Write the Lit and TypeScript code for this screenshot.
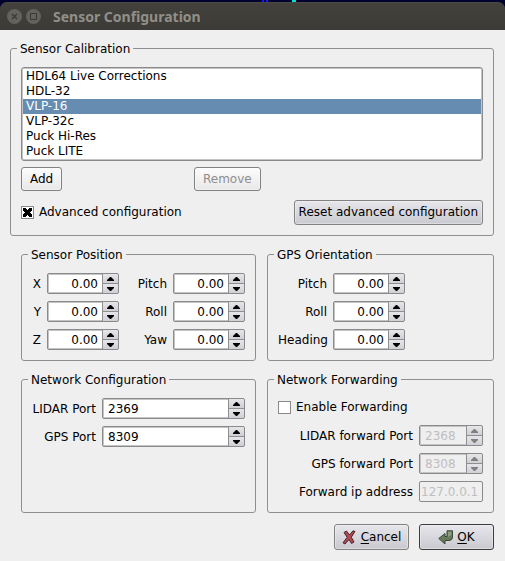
import { LitElement, html, css, svg } from "lit";
import { customElement, property } from "lit/decorators.js";

const controls = css`
  * {
    box-sizing: border-box;
  }
  button,
  input,
  select {
    font: inherit;
    color: inherit;
    margin: 0;
  }
`;

@customElement("spin-box")
class SpinBox extends LitElement {
  @property() value = "0";
  @property() name = "";
  @property({ type: Number }) step = 1;
  @property() align = "left";
  @property({ type: Boolean, reflect: true }) disabled = false;

  static styles = [
    controls,
    css`
      :host {
        display: block;
      }
      .box {
        display: flex;
        height: 21px;
        border: 1px solid #8a8a8a;
        border-radius: 2px;
        background: #8f8f8f;
        overflow: hidden;
      }
      .field {
        flex: 1;
        min-width: 0;
        width: 0;
        height: 19px;
        border: 1px solid #c4c4c4;
        border-right: 0;
        padding: 0 4px;
        background: #fff;
        outline: 0;
        appearance: textfield;
      }
      .field::-webkit-inner-spin-button,
      .field::-webkit-outer-spin-button {
        appearance: none;
        margin: 0;
      }
      .right {
        text-align: right;
      }
      .steps {
        display: grid;
        grid-template-rows: 1fr 1fr;
        gap: 1px;
        width: 16px;
        padding-left: 1px;
      }
      .step {
        display: grid;
        place-items: center;
        border: 0;
        padding: 0;
        background: linear-gradient(#e6e6ea, #cfcfd5);
      }
      .arrow {
        display: block;
        width: 7px;
        height: 4px;
        fill: #000;
      }
      :host([disabled]) .field {
        color: #bebebe;
        background: #efefef;
      }
      :host([disabled]) .arrow {
        fill: #808080;
      }
    `,
  ];

  private bump(direction: number) {
    const digits = this.step < 1 ? 2 : 0;
    this.value = (Number(this.value) + direction * this.step).toFixed(digits);
  }

  render() {
    return html`<div class="box">
      <input
        class="field ${this.align}"
        type="number"
        aria-label=${this.name}
        step=${this.step}
        .value=${this.value}
        ?disabled=${this.disabled}
      />
      <div class="steps">
        <button class="step" aria-label="Increase ${this.name}" ?disabled=${this.disabled} @click=${() => this.bump(1)}>
          <svg class="arrow" viewBox="0 0 7 4"><path d="M3 0h1l3 3v1H0V3z" /></svg>
        </button>
        <button class="step" aria-label="Decrease ${this.name}" ?disabled=${this.disabled} @click=${() => this.bump(-1)}>
          <svg class="arrow" viewBox="0 0 7 4"><path d="M0 0h7v1L4 4H3L0 1z" /></svg>
        </button>
      </div>
    </div>`;
  }
}

const cancelIcon = svg`
  <path d="M2 2.500L4.500 1L7.500 5L11 .8L13 1.500L9.300 7.200L12 12L9.500 13.500L7 9.500L3 14L1 12.800L5.200 7.300Z"
    fill="#b04a52" stroke="#4b2529" stroke-width="1" stroke-linejoin="round" />`;

const okIcon = svg`
  <path d="M9 .8H14.500V7Q14.500 10.500 11 10.500H7V14L.8 8.500L7 3.500V6.500H9Z"
    fill="#66795a" stroke="#3b4735" stroke-width="1" stroke-linejoin="round" />
  <path d="M10 1.800H13.500V5L10 7Z" fill="#8b9c80" />`;

@customElement("app-root")
class AppRoot extends LitElement {
  static styles = [
    controls,
    css`
      :host {
        display: flex;
        flex-direction: column;
        min-height: 100vh;
        background: #efefef;
        color: #000;
        font: 12px/15px "DejaVu Sans", sans-serif;
      }
      .desktop {
        padding-top: 2px;
        background: linear-gradient(90deg, transparent 262px, #1717ff 262px 264px, transparent 264px 266px, #1717ff 266px 268px, transparent 268px 292px, #00e0d0 292px 296px, transparent 296px) 0 0 / 100% 2px no-repeat #02022e;
      }
      .titlebar {
        display: flex;
        align-items: center;
        gap: 4px;
        height: 28px;
        padding: 0 7px;
        border-top: 1px solid #4b4a45;
        border-radius: 7px 7px 0 0;
        background: linear-gradient(#42413c, #3c3b37);
      }
      .window-button {
        display: block;
        width: 15px;
        height: 15px;
        border: 0;
        padding: 0;
        background: none;
      }
      .window-button svg {
        display: block;
      }
      .title {
        margin: 0 0 0 8px;
        color: #918f88;
        font: bold 14px/20px "Noto Sans", sans-serif;
      }
      .content {
        display: flex;
        flex-direction: column;
        gap: 10px;
        padding: 10px 11px 11px 10px;
      }
      .group {
        min-width: 0;
        margin: 0;
        border: 1px solid #8f8f8f;
        border-radius: 3px;
        padding: 10px;
      }
      .legend {
        margin-left: -4px;
        padding: 2px 3px 0;
      }
      .list {
        display: block;
        width: 100%;
        height: 94px;
        border: 1px solid #8a8a8a;
        border-radius: 3px;
        padding: 1px;
        background: #fff;
        box-shadow: inset 0 0 0 1px #c4c4c4;
        outline: 0;
        overflow: hidden;
      }
      .item {
        min-height: 15px;
        height: 15px;
        padding: 0 3px;
        line-height: 17px;
      }
      .item:checked {
        background: linear-gradient(#678cb2, #678cb2);
        -webkit-text-fill-color: #fff;
      }
      .row {
        display: flex;
        align-items: center;
        justify-content: space-between;
      }
      .edit-row {
        display: grid;
        grid-template-columns: 173fr 289fr;
        justify-items: start;
        margin: 6px 0 9px;
      }
      .button {
        display: inline-flex;
        align-items: center;
        justify-content: center;
        height: 25px;
        border: 1px solid #828282;
        border-radius: 3px;
        padding: 0 4px;
        background: linear-gradient(#e6e6eb, #c9c9d0);
        box-shadow: inset 0 0 0 1px #ffffff55;
      }
      .light {
        height: 24px;
        padding: 0 8px;
        background: linear-gradient(#fcfcfc, #e8e8e8);
      }
      .light:disabled {
        color: #8e8e8e;
      }
      .check {
        display: flex;
        align-items: center;
        gap: 5px;
      }
      .tick {
        appearance: none;
        width: 13px;
        height: 13px;
        border: 1px solid #8a8a8a;
        background: #fff;
      }
      .tick:checked {
        background:
          linear-gradient(45deg, transparent 35%, #000 35% 65%, transparent 65%) 1px 1px / 9px 9px no-repeat,
          linear-gradient(-45deg, transparent 35%, #000 35% 65%, transparent 65%) 1px 1px / 9px 9px no-repeat,
          #fff;
      }
      .panels {
        display: grid;
        grid-template-columns: 235fr 227fr;
        gap: 10px 11px;
        padding-left: 11px;
      }
      .form {
        display: grid;
        align-items: center;
        gap: 7px 6px;
      }
      .label {
        padding-top: 2px;
        text-align: right;
      }
      .position {
        grid-template-columns: 9px 72px 1fr 72px;
      }
      .orientation {
        grid-template-columns: 49px 72px;
      }
      .network {
        grid-template-columns: 64px 1fr;
      }
      .forward {
        grid-template-columns: 1fr 64px;
        margin-top: 10px;
      }
      .enable {
        margin-top: 2px;
      }
      .address {
        width: 100%;
        height: 21px;
        border: 1px solid #8a8a8a;
        border-radius: 2px;
        padding: 0 1px;
        background: #efefef;
      }
      .address:disabled {
        color: #bebebe;
      }
      .actions {
        display: flex;
        justify-content: flex-end;
        gap: 10px;
        margin-top: 1px;
      }
      .action {
        gap: 4px;
        width: 75px;
        height: 26px;
      }
      .default {
        border-color: #3c3c3c;
      }
      .icon {
        flex: none;
        width: 15px;
        height: 15px;
      }
      .key {
        text-decoration: underline;
        text-underline-offset: 2px;
      }
    `,
  ];

  private spin(label: string, name: string) {
    return html`<span class="label">${label}</span><spin-box name=${name} value="0.00" step="0.01" align="right"></spin-box>`;
  }

  render() {
    const sensors = ["HDL64 Live Corrections", "HDL-32", "VLP-16", "VLP-32c", "Puck Hi-Res", "Puck LITE"];
    return html`
      <div class="desktop">
        <header class="titlebar">
          <button class="window-button" aria-label="Close">
            <svg width="15" height="15" viewBox="0 0 15 15">
              <circle cx="7.500" cy="7.500" r="7.500" fill="#64625c" />
              <path d="M5 5l5 5M10 5l-5 5" stroke="#3a3935" stroke-width="1.200" />
            </svg>
          </button>
          <button class="window-button" aria-label="Maximize">
            <svg width="15" height="15" viewBox="0 0 15 15">
              <circle cx="7.500" cy="7.500" r="7.500" fill="#64625c" />
              <path d="M4.500 4.500h6v6h-6z" fill="none" stroke="#3a3935" />
            </svg>
          </button>
          <h1 class="title">Sensor Configuration</h1>
        </header>
      </div>
      <main class="content">
        <fieldset class="group">
          <legend class="legend">Sensor Calibration</legend>
          <select class="list" size="6" aria-label="Sensor Calibration">
            ${sensors.map((s) => html`<option class="item" ?selected=${s === "VLP-16"}>${s}</option>`)}
          </select>
          <div class="edit-row">
            <button class="button light">Add</button>
            <button class="button light" disabled>Remove</button>
          </div>
          <div class="row">
            <label class="check"><input class="tick" type="checkbox" checked />Advanced configuration</label>
            <button class="button">Reset advanced configuration</button>
          </div>
        </fieldset>
        <div class="panels">
          <fieldset class="group">
            <legend class="legend">Sensor Position</legend>
            <div class="form position">
              ${this.spin("X", "X")}${this.spin("Pitch", "Pitch")}
              ${this.spin("Y", "Y")}${this.spin("Roll", "Roll")}
              ${this.spin("Z", "Z")}${this.spin("Yaw", "Yaw")}
            </div>
          </fieldset>
          <fieldset class="group">
            <legend class="legend">GPS Orientation</legend>
            <div class="form orientation">
              ${this.spin("Pitch", "GPS pitch")}${this.spin("Roll", "GPS roll")}${this.spin("Heading", "GPS heading")}
            </div>
          </fieldset>
          <fieldset class="group">
            <legend class="legend">Network Configuration</legend>
            <div class="form network">
              <span class="label">LIDAR Port</span><spin-box name="LIDAR Port" value="2369"></spin-box>
              <span class="label">GPS Port</span><spin-box name="GPS Port" value="8309"></spin-box>
            </div>
          </fieldset>
          <fieldset class="group">
            <legend class="legend">Network Forwarding</legend>
            <label class="check enable"><input class="tick" type="checkbox" />Enable Forwarding</label>
            <div class="form forward">
              <span class="label">LIDAR forward Port</span><spin-box name="LIDAR forward Port" value="2368" disabled></spin-box>
              <span class="label">GPS forward Port</span><spin-box name="GPS forward Port" value="8308" disabled></spin-box>
              <label class="label" for="address">Forward ip address</label><input class="address" id="address" value="127.0.0.1" disabled />
            </div>
          </fieldset>
        </div>
        <div class="actions">
          <button class="button action"><svg class="icon" viewBox="0 0 15 15">${cancelIcon}</svg><span><span class="key">C</span>ancel</span></button>
          <button class="button action default"><svg class="icon" viewBox="0 0 15 15">${okIcon}</svg><span><span class="key">O</span>K</span></button>
        </div>
      </main>
    `;
  }
}
